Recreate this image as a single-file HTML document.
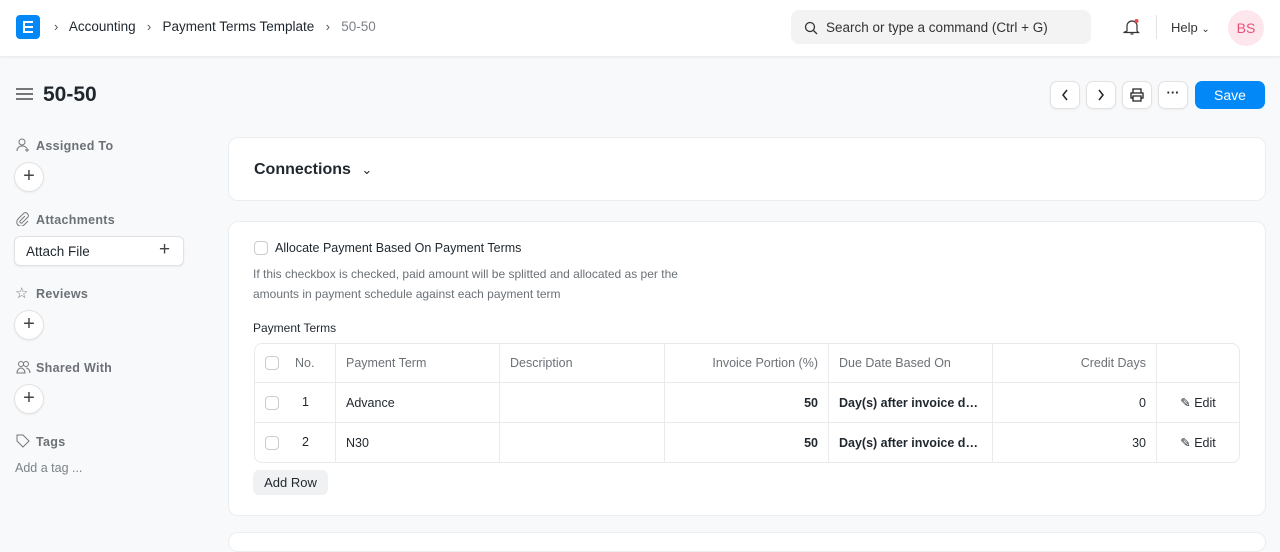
<!DOCTYPE html>
<html><head><meta charset="utf-8"><style>
*{box-sizing:border-box;margin:0;padding:0}
body{width:1280px;height:535px;overflow:hidden;background:#f8f9fa;font-family:"Liberation Sans",sans-serif;color:#1f272e;font-size:13px;position:relative}
.nav{position:absolute;left:0;top:0;width:1280px;height:56px;background:#fff;box-shadow:0 1px 3px rgba(0,0,0,.08)}
.abs{position:absolute}
.logo{left:16px;top:15px;width:24px;height:24px;background:#0289f7;border-radius:4px}
.bc{top:19px;font-size:13.5px;color:#1f272e}
.chev{color:#555;font-size:13px}
.search{left:791px;top:10px;width:300px;height:34px;background:#f3f3f3;border-radius:8px;color:#333;font-size:13.5px;padding:10px 0 0 35px}
.avatar{left:1228px;top:10px;width:36px;height:36px;border-radius:50%;background:#fde6ec;color:#e8527a;font-size:14px;text-align:center;line-height:36px}
.btn{top:81px;width:30px;height:28px;background:#fff;border:1px solid #e2e2e2;border-radius:7px;box-shadow:0 1px 2px rgba(0,0,0,.05)}
.save{left:1195px;top:81px;width:70px;height:28px;background:#0289f7;color:#fff;border-radius:7px;text-align:center;line-height:28px;font-size:14px}
.lbl{left:36px;font-size:12.5px;color:#6b7177;font-weight:bold;letter-spacing:.3px}
.plus{left:14px;width:30px;height:30px;border-radius:50%;background:#fff;border:1px solid #e2e2e2;box-shadow:0 1px 2px rgba(0,0,0,.06);text-align:center;line-height:27px;font-size:20px;color:#444}
.card{background:#fff;border:1px solid #ebeef0;border-radius:10px}
table{border-collapse:separate;border-spacing:0;position:absolute;left:254px;top:343px;width:986px;border:1px solid #e8eaed;border-radius:8px;font-size:12.5px;table-layout:fixed}
td{height:40px;border-right:1px solid #e8eaed;border-bottom:1px solid #e8eaed;padding:0 10px;white-space:nowrap;overflow:hidden;text-overflow:ellipsis}
tr:last-child td{border-bottom:none;height:39px}
td:last-child{border-right:none}
.h td{color:#6b7177;height:39px}
.cb{display:inline-block;width:14px;height:14px;border:1px solid #c9ccd0;border-radius:4px;vertical-align:middle;background:#fff}
.r{text-align:right}.b{font-weight:bold}
</style></head><body>
<div class="nav">
 <div class="abs logo"><div class="abs" style="left:7px;top:6px;width:10px;height:12px;border:2.5px solid #fff;border-right:none"></div><div class="abs" style="left:9px;top:10.5px;width:8px;height:2.5px;background:#fff"></div></div>
 <div class="abs bc" style="left:54px"><span class="chev">›</span>&nbsp;&nbsp; Accounting &nbsp;&nbsp;<span class="chev">›</span>&nbsp;&nbsp; Payment Terms Template &nbsp;&nbsp;<span class="chev">›</span>&nbsp;&nbsp; <span style="color:#7c8288">50-50</span></div>
 <div class="abs search">Search or type a command (Ctrl + G)
  <svg class="abs" style="left:13px;top:11px" width="14" height="14" viewBox="0 0 14 14"><circle cx="6" cy="6" r="4.5" fill="none" stroke="#333" stroke-width="1.3"/><path d="M9.5 9.5L13 13" stroke="#333" stroke-width="1.3"/></svg></div>
 <svg class="abs" style="left:1123px;top:18px" width="18" height="18" viewBox="0 0 18 18"><path d="M4 13V8a5 5 0 0110 0v5l1.5 1.5h-15z" fill="none" stroke="#333" stroke-width="1.2"/><path d="M7.5 16h3" stroke="#333" stroke-width="1.2"/><circle cx="13.5" cy="3" r="2" fill="#e24c4c"/></svg>
 <div class="abs" style="left:1156px;top:15px;width:1px;height:24px;background:#e2e2e2"></div>
 <div class="abs" style="left:1171px;top:20px;font-size:13px;color:#333">Help <span style="font-size:10px">⌄</span></div>
 <div class="abs avatar">BS</div>
</div>
<div class="abs" style="left:16px;top:88px;width:17px;height:2px;background:#777;box-shadow:0 5px 0 #777,0 10px 0 #777"></div>
<div class="abs" style="left:43px;top:83px;font-size:21px;font-weight:bold">50-50</div>
<div class="abs btn" style="left:1050px"><svg width="28" height="26" viewBox="0 0 28 26"><path d="M16 8l-4 5 4 5" fill="none" stroke="#222" stroke-width="1.5"/></svg></div>
<div class="abs btn" style="left:1086px"><svg width="28" height="26" viewBox="0 0 28 26"><path d="M12 8l4 5-4 5" fill="none" stroke="#222" stroke-width="1.5"/></svg></div>
<div class="abs btn" style="left:1122px"><svg width="28" height="26" viewBox="0 0 28 26"><path d="M10 11V7h8v4M10 16H8v-5h12v5h-2M10 14h8v5h-8z" fill="none" stroke="#222" stroke-width="1.3"/></svg></div>
<div class="abs btn" style="left:1158px;text-align:center;line-height:22px;font-weight:bold">···</div>
<div class="abs save">Save</div>

<div class="abs lbl" style="top:139px">Assigned To</div>
<svg class="abs" style="left:16px;top:138px" width="14" height="14" viewBox="0 0 14 14"><circle cx="6" cy="4" r="3" fill="none" stroke="#777"/><path d="M1 13c0-3 2-5 5-5s4 1 4.5 2M11 10v4M9 12h4" fill="none" stroke="#777"/></svg>
<div class="abs plus" style="top:162px">+</div>
<div class="abs lbl" style="top:213px">Attachments</div>
<svg class="abs" style="left:16px;top:212px" width="14" height="14" viewBox="0 0 14 14"><path d="M9 4l-5 5a1.5 1.5 0 002 2l6-6a3 3 0 00-4-4L2 7a4 4 0 006 6l4-4" fill="none" stroke="#777"/></svg>
<div class="abs" style="left:14px;top:236px;width:170px;height:30px;background:#fff;border:1px solid #e2e2e2;border-radius:6px;box-shadow:0 1px 2px rgba(0,0,0,.06);font-size:13.5px;padding:7px 0 0 11px">Attach File<span class="abs" style="left:144px;top:2px;font-size:19px;color:#444">+</span></div>
<div class="abs lbl" style="top:287px">Reviews</div>
<div class="abs" style="left:15px;top:284px;font-size:15px;color:#777">☆</div>
<div class="abs plus" style="top:310px">+</div>
<div class="abs lbl" style="top:361px">Shared With</div>
<svg class="abs" style="left:16px;top:360px" width="15" height="14" viewBox="0 0 15 14"><circle cx="5" cy="4" r="2.5" fill="none" stroke="#777"/><circle cx="10" cy="4" r="2.5" fill="none" stroke="#777"/><path d="M1 13c0-3 2-5 4-5s4 2 4 5zM10 8c2 0 4 2 4 5" fill="none" stroke="#777"/></svg>
<div class="abs plus" style="top:384px">+</div>
<div class="abs lbl" style="top:435px">Tags</div>
<svg class="abs" style="left:16px;top:434px" width="14" height="14" viewBox="0 0 14 14"><path d="M1 1h6l6 6-6 6-6-6z" fill="none" stroke="#777"/></svg>
<div class="abs" style="left:15px;top:461px;color:#7c8288;font-size:12.5px">Add a tag ...</div>

<div class="abs card" style="left:228px;top:137px;width:1038px;height:64px"><div class="abs" style="left:25px;top:23px;font-size:16px;font-weight:bold">Connections <span style="font-weight:normal;font-size:13px;margin-left:6px">⌄</span></div></div>
<div class="abs card" style="left:228px;top:221px;width:1038px;height:295px"></div>
<div class="abs card" style="left:228px;top:532px;width:1038px;height:20px"></div>
<span class="abs cb" style="left:254px;top:241px"></span>
<div class="abs" style="left:275px;top:241px;font-size:12.5px">Allocate Payment Based On Payment Terms</div>
<div class="abs" style="left:253px;top:264px;font-size:12px;color:#6b7177;line-height:20px">If this checkbox is checked, paid amount will be splitted and allocated as per the<br>amounts in payment schedule against each payment term</div>
<div class="abs" style="left:253px;top:321px;font-size:12px">Payment Terms</div>
<table>
<colgroup><col style="width:81px"><col style="width:164px"><col style="width:165px"><col style="width:164px"><col style="width:164px"><col style="width:164px"><col></colgroup>
<tr class="h"><td><span class="cb"></span><span style="margin-left:16px">No.</span></td><td>Payment Term</td><td>Description</td><td class="r">Invoice Portion (%)</td><td>Due Date Based On</td><td class="r">Credit Days</td><td></td></tr>
<tr><td><span class="cb"></span><span style="margin-left:23px">1</span></td><td>Advance</td><td></td><td class="r b">50</td><td class="b">Day(s) after invoice date</td><td class="r">0</td><td style="text-align:center">✎ Edit</td></tr>
<tr><td><span class="cb"></span><span style="margin-left:23px">2</span></td><td>N30</td><td></td><td class="r b">50</td><td class="b">Day(s) after invoice date</td><td class="r">30</td><td style="text-align:center">✎ Edit</td></tr>
</table>
<div class="abs" style="left:253px;top:470px;width:75px;height:25px;background:#f0f1f2;border-radius:6px;font-size:13px;text-align:center;line-height:25px">Add Row</div>
</body></html>
